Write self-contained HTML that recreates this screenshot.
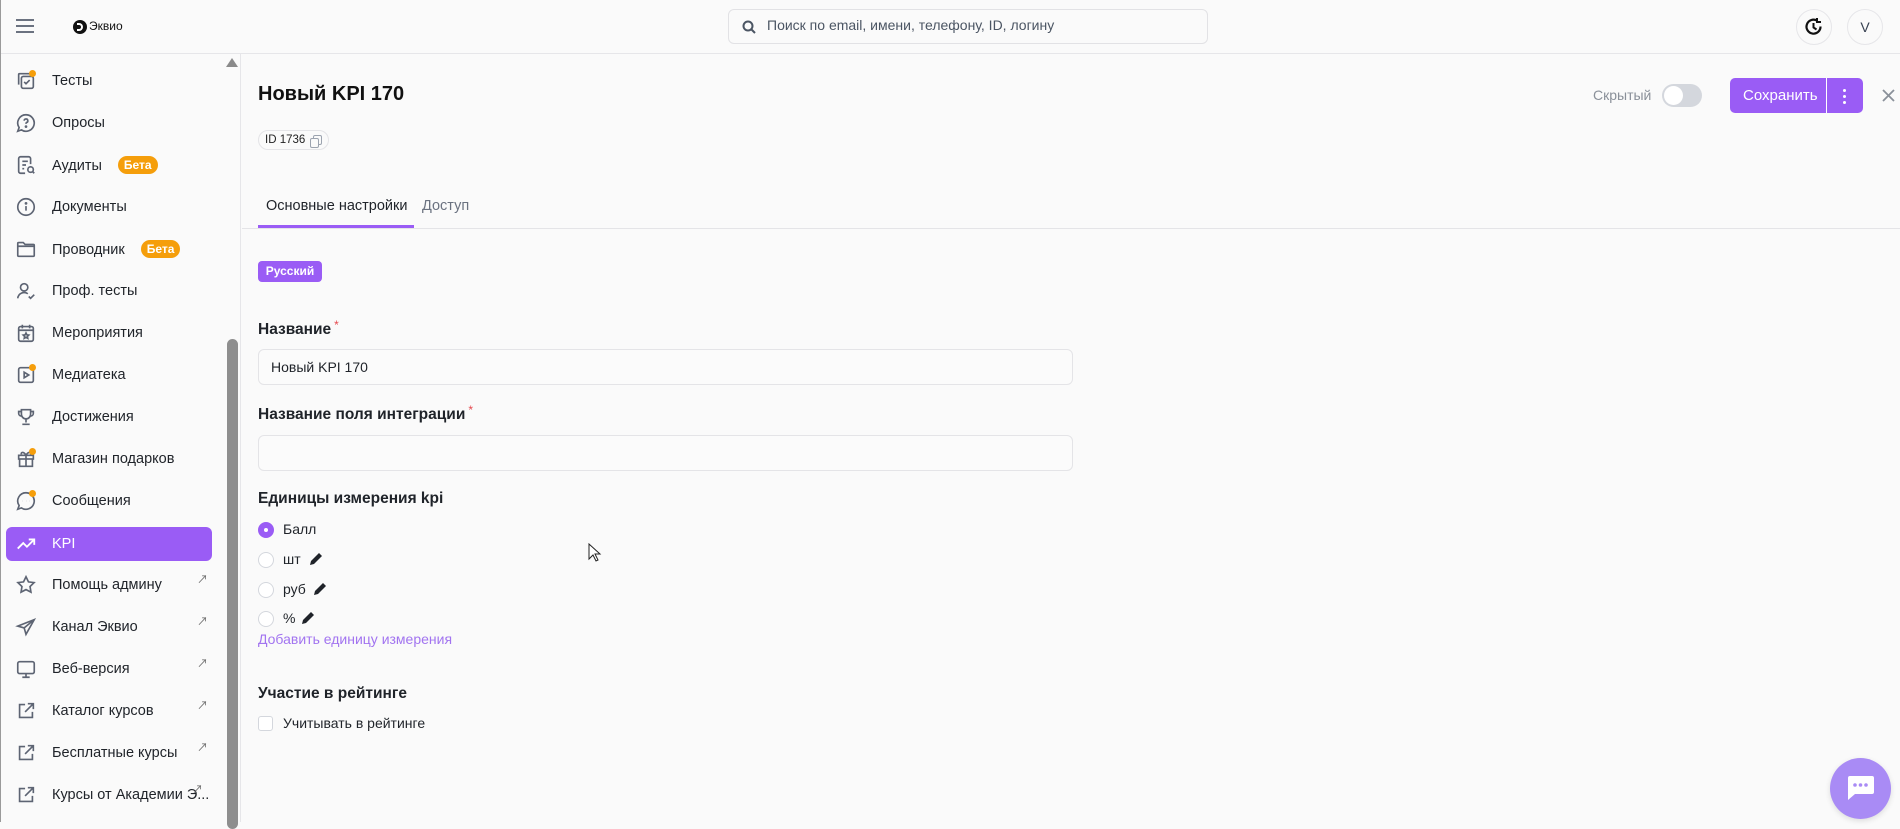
<!DOCTYPE html>
<html><head><meta charset="utf-8">
<style>
*{box-sizing:border-box;margin:0;padding:0}
body{width:1900px;height:822px;overflow:hidden;background:#fafafa;font-family:"Liberation Sans","Noto Sans CJK SC",sans-serif;color:#1f2329;position:relative}
.abs{position:absolute}
.top{left:0;top:0;width:1900px;height:54px;border-bottom:1px solid #e6e6e9;background:#fafafa}
.side{left:0;top:54px;width:241px;height:768px;background:#fafafa;border-right:1px solid #e6e6e9}
.item{position:absolute;left:6px;width:206px;height:34px;display:flex;align-items:center;font-size:14.5px;color:#1f2329}
.item svg{position:absolute;left:9px;width:22px;height:22px}
.item .t{position:absolute;left:46px;white-space:nowrap}
.beta{display:inline-block;background:#f59e0b;color:#fff;font-size:12px;font-weight:bold;border-radius:9px;padding:2px 6px;margin-left:16px;vertical-align:1px}
.ext{position:absolute;left:191px;top:3px;font-size:11px;color:#666}
.dot{position:absolute;width:7px;height:7px;border-radius:50%;background:#f59e0b}
.lbl{position:absolute;left:258px;font-size:15.5px;font-weight:bold;color:#1f2329}
.req{color:#e5484d;font-weight:normal;font-size:12px;vertical-align:5px;margin-left:3px}
.inp{position:absolute;left:258px;width:815px;height:36px;border:1px solid #e4e4e7;border-radius:6px;background:#fbfbfb;font-size:14px;padding:9px 12px}
.radio{position:absolute;left:258px;width:16px;height:16px;border-radius:50%;border:1px solid #d4d7dd;background:#fff}
.rt{position:absolute;left:283px;font-size:14px;color:#1f2329}
</style></head><body>
<div class="abs" style="left:0;top:0;width:1900px;height:2px;background:repeating-linear-gradient(90deg,#3a3a3a 0 90px,#bbb 90px 100px)"></div>
<div class="abs top"></div>
<svg class="abs" style="left:16px;top:19px" width="18" height="14"><g stroke="#6b7280" stroke-width="2"><line x1="0" y1="1" x2="18" y2="1"/><line x1="0" y1="7" x2="18" y2="7"/><line x1="0" y1="13" x2="18" y2="13"/></g></svg>
<div class="abs" style="left:73px;top:20px;width:14px;height:14px;border-radius:50%;background:#111"><div style="position:absolute;left:4px;top:3px;width:6px;height:8px;border:2px solid #fff;border-left:none;border-radius:0 4px 4px 0"></div></div>
<div class="abs" style="left:89px;top:19px;font-size:12px;color:#111">Эквио</div>
<div class="abs" style="left:728px;top:9px;width:480px;height:35px;border:1px solid #e2e2e5;border-radius:6px;background:#fafafa"></div>
<svg class="abs" style="left:742px;top:20px" width="14" height="14"><circle cx="6" cy="6" r="4.5" stroke="#4b5563" stroke-width="2" fill="none"/><line x1="9.5" y1="9.5" x2="13" y2="13" stroke="#4b5563" stroke-width="2"/></svg>
<div class="abs" style="left:767px;top:17px;font-size:14px;color:#4b5563">Поиск по email, имени, телефону, ID, логину</div>
<div class="abs" style="left:1796px;top:9px;width:36px;height:36px;border-radius:50%;border:1px solid #e6e6e9"></div>
<svg class="abs" style="left:1804px;top:17px" width="20" height="20" viewBox="0 0 20 20"><path d="M16.5 9.5A7 7 0 1 1 13 3.6" stroke="#111" stroke-width="2.2" fill="none"/><path d="M13 1v4h4" stroke="#111" stroke-width="2" fill="none"/><path d="M9.5 6v4.5l3 2" stroke="#111" stroke-width="2" fill="none"/></svg>
<div class="abs" style="left:1847px;top:9px;width:36px;height:36px;border-radius:50%;border:1px solid #e6e6e9;text-align:center;line-height:34px;font-size:14px;color:#374151">V</div>

<div class="abs side"></div>
<div class="abs" style="left:0;top:0;width:1px;height:822px;background:#9a9a9a"></div>
<div class="abs" style="left:226px;top:58px;width:0;height:0;border-left:6px solid transparent;border-right:6px solid transparent;border-bottom:9px solid #8a8a8a"></div>
<div class="abs" style="left:227px;top:339px;width:11px;height:490px;border-radius:6px;background:#8e8e8e"></div>

<div class="item" style="top:64px"><svg viewBox="0 0 24 24" fill="none" stroke="#5d6473" stroke-width="1.8"><rect x="7" y="7" width="13" height="13" rx="2"/><path d="M4 16V5a1 1 0 0 1 1-1h11"/><path d="M10 13l2 2 4-4"/></svg><span class="dot" style="left:23px;top:6px"></span><span class="t">Тесты</span></div>
<div class="item" style="top:106px"><svg viewBox="0 0 24 24" fill="none" stroke="#5d6473" stroke-width="1.8"><path d="M12 3a9 9 0 1 1-5 16.5L3 21l1.5-4A9 9 0 0 1 12 3z"/><path d="M10 9.5a2 2 0 1 1 2.5 2c-.5.2-.5.6-.5 1.5"/><circle cx="12" cy="16" r=".6" fill="#5d6473"/></svg><span class="t">Опросы</span></div>
<div class="item" style="top:148px"><svg viewBox="0 0 24 24" fill="none" stroke="#5d6473" stroke-width="1.8"><path d="M11 21H6a2 2 0 0 1-2-2V5a2 2 0 0 1 2-2h9a2 2 0 0 1 2 2v6"/><path d="M8 8h6M8 12h4M8 16h2"/><circle cx="17" cy="17" r="3"/><path d="M19.5 19.5L21 21"/></svg><span class="t">Аудиты<span class="beta">Бета</span></span></div>
<div class="item" style="top:190px"><svg viewBox="0 0 24 24" fill="none" stroke="#5d6473" stroke-width="1.8"><circle cx="12" cy="12" r="9"/><path d="M12 11v5"/><circle cx="12" cy="8" r=".6" fill="#5d6473"/></svg><span class="t">Документы</span></div>
<div class="item" style="top:232px"><svg viewBox="0 0 24 24" fill="none" stroke="#5d6473" stroke-width="1.8"><path d="M3 6a1 1 0 0 1 1-1h5l2 2h9a1 1 0 0 1 1 1v11a1 1 0 0 1-1 1H4a1 1 0 0 1-1-1z"/><path d="M3 9h18"/></svg><span class="t">Проводник<span class="beta">Бета</span></span></div>
<div class="item" style="top:274px"><svg viewBox="0 0 24 24" fill="none" stroke="#5d6473" stroke-width="1.8"><circle cx="10" cy="8" r="4"/><path d="M3 20a7 7 0 0 1 11-5"/><path d="M15 18l2 2 4-4"/></svg><span class="t">Проф. тесты</span></div>
<div class="item" style="top:316px"><svg viewBox="0 0 24 24" fill="none" stroke="#5d6473" stroke-width="1.8"><rect x="4" y="5" width="16" height="16" rx="2"/><path d="M8 3v4M16 3v4M4 9h16"/><path d="M12 12l1 2 2 .3-1.5 1.4.4 2.1-1.9-1-1.9 1 .4-2.1L9 14.3l2-.3z"/></svg><span class="t">Мероприятия</span></div>
<div class="item" style="top:358px"><svg viewBox="0 0 24 24" fill="none" stroke="#5d6473" stroke-width="1.8"><rect x="4" y="4" width="16" height="16" rx="2"/><path d="M10 9l5 3-5 3z"/></svg><span class="dot" style="left:23px;top:6px"></span><span class="t">Медиатека</span></div>
<div class="item" style="top:400px"><svg viewBox="0 0 24 24" fill="none" stroke="#5d6473" stroke-width="1.8"><path d="M7 4h10v5a5 5 0 0 1-10 0z"/><path d="M7 6H4v2a3 3 0 0 0 3 3M17 6h3v2a3 3 0 0 1-3 3M12 14v4M8 20h8"/></svg><span class="t">Достижения</span></div>
<div class="item" style="top:442px"><svg viewBox="0 0 24 24" fill="none" stroke="#5d6473" stroke-width="1.8"><rect x="4" y="8" width="16" height="4"/><path d="M5 12v8h14v-8M12 8v12M12 8c-2-4-6-4-5-1M12 8c2-4 6-4 5-1"/></svg><span class="dot" style="left:23px;top:6px"></span><span class="t">Магазин подарков</span></div>
<div class="item" style="top:484px"><svg viewBox="0 0 24 24" fill="none" stroke="#5d6473" stroke-width="1.8"><path d="M12 3a9 9 0 1 1-5 16.5L3 21l1.5-4A9 9 0 0 1 12 3z"/><path d="M8 12h.1M12 12h.1M16 12h.1"/></svg><span class="dot" style="left:23px;top:6px"></span><span class="t">Сообщения</span></div>
<div class="item" style="top:527px;background:#9a5cf5;border-radius:6px;color:#fff"><svg viewBox="0 0 24 24" fill="none" stroke="#fff" stroke-width="2"><path d="M3 17l6-6 4 4 8-8"/><path d="M15 7h6v6"/></svg><span class="t">KPI</span></div>
<div class="item" style="top:568px"><svg viewBox="0 0 24 24" fill="none" stroke="#5d6473" stroke-width="1.8"><path d="M12 3l2.7 5.6 6.1.8-4.4 4.3 1 6.1L12 17l-5.4 2.8 1-6.1L3.2 9.4l6.1-.8z"/></svg><span class="t">Помощь админу</span><span class="ext">↗</span></div>
<div class="item" style="top:610px"><svg viewBox="0 0 24 24" fill="none" stroke="#5d6473" stroke-width="1.8"><path d="M21 4L3 11l7 2 2 7z"/><path d="M21 4L10 13"/></svg><span class="t">Канал Эквио</span><span class="ext">↗</span></div>
<div class="item" style="top:652px"><svg viewBox="0 0 24 24" fill="none" stroke="#5d6473" stroke-width="1.8"><rect x="3" y="4" width="18" height="13" rx="2"/><path d="M8 21h8M12 17v4"/></svg><span class="t">Веб-версия</span><span class="ext">↗</span></div>
<div class="item" style="top:694px"><svg viewBox="0 0 24 24" fill="none" stroke="#5d6473" stroke-width="1.8"><path d="M11 5H5v14h14v-6"/><path d="M14 4h6v6M20 4l-9 9"/></svg><span class="t">Каталог курсов</span><span class="ext">↗</span></div>
<div class="item" style="top:736px"><svg viewBox="0 0 24 24" fill="none" stroke="#5d6473" stroke-width="1.8"><path d="M11 5H5v14h14v-6"/><path d="M14 4h6v6M20 4l-9 9"/></svg><span class="t">Бесплатные курсы</span><span class="ext">↗</span></div>
<div class="item" style="top:778px"><svg viewBox="0 0 24 24" fill="none" stroke="#5d6473" stroke-width="1.8"><path d="M11 5H5v14h14v-6"/><path d="M14 4h6v6M20 4l-9 9"/></svg><span class="t">Курсы от Академии Э...</span><span class="ext" style="left:186px">↗</span></div>

<div class="abs" style="left:258px;top:83px;font-size:20px;font-weight:bold;color:#111">Новый KPI 170</div>
<div class="abs" style="left:258px;top:130px;width:71px;height:20px;border:1px solid #e4e4e7;border-radius:10px;font-size:11.5px;padding:3px 0 0 6px;color:#222">ID 1736</div>
<div class="abs" style="left:313px;top:135px;width:9px;height:10px;border:1.5px solid #9ca3af;border-radius:2px;background:#fafafa"></div>
<div class="abs" style="left:310px;top:138px;width:9px;height:10px;border:1.5px solid #9ca3af;border-radius:2px;background:#fafafa"></div>

<div class="abs" style="left:1593px;top:87px;font-size:14px;color:#8a9099">Скрытый</div>
<div class="abs" style="left:1662px;top:84px;width:40px;height:23px;border-radius:12px;background:#d4d7dd"><div style="position:absolute;left:2px;top:2px;width:19px;height:19px;border-radius:50%;background:#fff"></div></div>
<div class="abs" style="left:1730px;top:78px;width:133px;height:35px;border-radius:5px;background:#9a5cf5"></div>
<div class="abs" style="left:1826px;top:78px;width:1px;height:35px;background:#fff"></div>
<div class="abs" style="left:1743px;top:87px;font-size:15px;color:#fff">Сохранить</div>
<div class="abs" style="left:1843px;top:89px;width:3px;height:3px;border-radius:50%;background:#fff;box-shadow:0 6px 0 #fff,0 12px 0 #fff"></div>
<svg class="abs" style="left:1882px;top:89px" width="13" height="13"><path d="M1 1l11 11M12 1L1 12" stroke="#8a9099" stroke-width="1.8"/></svg>

<div class="abs" style="left:242px;top:228px;width:1658px;height:1px;background:#e4e4e7"></div>
<div class="abs" style="left:266px;top:198px;font-size:14.5px;color:#1f2329">Основные настройки</div>
<div class="abs" style="left:422px;top:198px;font-size:14.5px;color:#6b7280">Доступ</div>
<div class="abs" style="left:258px;top:225px;width:156px;height:3px;background:#9a5cf5"></div>

<div class="abs" style="left:258px;top:261px;width:64px;height:21px;border-radius:4px;background:#9a5cf5;color:#fff;font-size:12px;font-weight:bold;text-align:center;line-height:21px">Русский</div>

<div class="lbl" style="top:318px">Название<span class="req">*</span></div>
<div class="inp" style="top:349px">Новый KPI 170</div>
<div class="lbl" style="top:403px">Название поля интеграции<span class="req">*</span></div>
<div class="inp" style="top:435px"></div>
<div class="lbl" style="top:490px">Единицы измерения kpi</div>

<div class="radio" style="top:522px;background:#9a5cf5;border-color:#9a5cf5"><div style="position:absolute;left:5px;top:5px;width:4px;height:4px;border-radius:50%;background:#fff"></div></div>
<div class="rt" style="top:521px">Балл</div>
<div class="radio" style="top:552px"></div><div class="rt" style="top:551px">шт</div>
<div class="radio" style="top:582px"></div><div class="rt" style="top:581px">руб</div>
<div class="radio" style="top:611px"></div><div class="rt" style="top:610px">%</div>
<svg class="abs" style="left:308px;top:551px" width="16" height="16" viewBox="0 0 16 16"><path d="M2 14l1-4 8-8 3 3-8 8z" fill="#1f2329"/></svg>
<svg class="abs" style="left:312px;top:581px" width="16" height="16" viewBox="0 0 16 16"><path d="M2 14l1-4 8-8 3 3-8 8z" fill="#1f2329"/></svg>
<svg class="abs" style="left:300px;top:610px" width="16" height="16" viewBox="0 0 16 16"><path d="M2 14l1-4 8-8 3 3-8 8z" fill="#1f2329"/></svg>
<div class="abs" style="left:258px;top:631px;font-size:14px;color:#a274f0">Добавить единицу измерения</div>

<div class="lbl" style="top:685px">Участие в рейтинге</div>
<div class="abs" style="left:258px;top:716px;width:15px;height:15px;border:1px solid #d4d7dd;border-radius:3px;background:#fff"></div>
<div class="abs" style="left:283px;top:715px;font-size:14px">Учитывать в рейтинге</div>

<svg class="abs" style="left:588px;top:543px" width="14" height="20" viewBox="0 0 14 20"><path d="M1 1v15l4-4 3 6 2-1-3-6h5z" fill="#fff" stroke="#222" stroke-width="1"/></svg>

<div class="abs" style="left:1830px;top:758px;width:61px;height:61px;border-radius:50%;background:#a98bf5;box-shadow:0 2px 6px rgba(0,0,0,.12)"></div>
<svg class="abs" style="left:1844px;top:773px" width="32" height="30" viewBox="0 0 32 30"><path d="M4 3h24a2 2 0 0 1 2 2v14a2 2 0 0 1-2 2H11l-7 6V5a2 2 0 0 1 2-2z" fill="#fff"/><circle cx="11" cy="12" r="1.8" fill="#a98bf5"/><circle cx="16.5" cy="12" r="1.8" fill="#a98bf5"/><circle cx="22" cy="12" r="1.8" fill="#a98bf5"/></svg>
</body></html>
